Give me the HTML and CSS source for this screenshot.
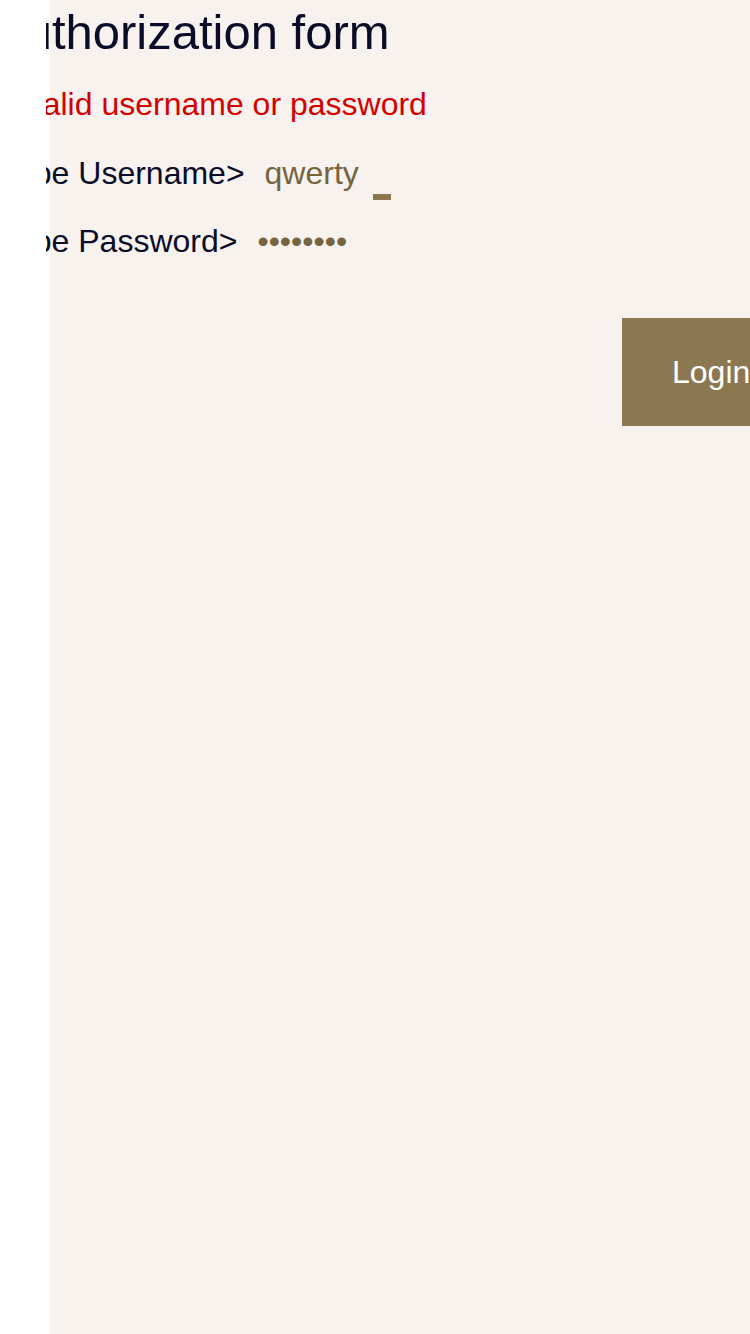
FILE: index.html
```html
<!DOCTYPE html>
<html lang="en">
<head>
<meta charset="utf-8">
<title>Authorization form</title>
<link rel="stylesheet" href="styles.css">
</head>
<body>
<div class="viewport">
  <main class="page">
    <h1 class="title">Authorization form</h1>
    <p class="error">Invalid username or password</p>
    <form class="form">
      <div class="row row-user">
        <span class="label">Type Username&gt;</span>
        <span class="value">qwerty</span>
        <span class="cursor"></span>
      </div>
      <div class="row row-pass">
        <span class="label">Type Password&gt;</span>
        <span class="dots">••••••••</span>
      </div>
      <div class="actions">
        <button type="button" class="login">Login</button>
      </div>
    </form>
  </main>
</div>
</body>
</html>
```
FILE: styles.css
```css
html, body {
  margin: 0;
  padding: 0;
  background: #ffffff;
}

body {
  font-family: "Liberation Sans", Arial, sans-serif;
  color: #0a0c28;
}

.viewport {
  margin-left: 46px;
  height: 1334px;
  overflow: hidden;
  background: linear-gradient(to right, #ffffff 0 4px, #f7f2ee 4px);
}

.page {
  margin-left: -42px;
  width: 900px;
  padding-top: 4px;
}

.title {
  margin: 0 0 0 -12px;
  font-size: 49px;
  font-weight: 400;
  line-height: normal;
}

.error {
  margin: 26px 0 0 -4px;
  font-size: 32px;
  color: #d40000;
  line-height: normal;
}

.form {
  margin: 32px 0 0 0;
  display: flex;
  flex-direction: column;
  gap: 30px;
}

.row {
  display: flex;
  align-items: baseline;
  gap: 20px;
  font-size: 32px;
  line-height: normal;
}

.row-user, .row-pass {
  margin-left: -4px;
}

.row-pass {
  margin-top: 1px;
}

.value {
  color: #76643f;
}

.cursor {
  display: inline-block;
  width: 18px;
  height: 6px;
  margin-left: -6px;
  background: #8b7851;
  align-self: flex-end;
  transform: translateY(8px);
}

.dots {
  color: #76643f;
}

.actions {
  padding-left: 618px;
  margin-top: 28px;
}

.login {
  height: 108px;
  padding: 0 50px;
  border: 0;
  border-radius: 0;
  background: #8b7851;
  color: #ffffff;
  font-family: "Liberation Sans", Arial, sans-serif;
  font-size: 32px;
  cursor: pointer;
}
```
